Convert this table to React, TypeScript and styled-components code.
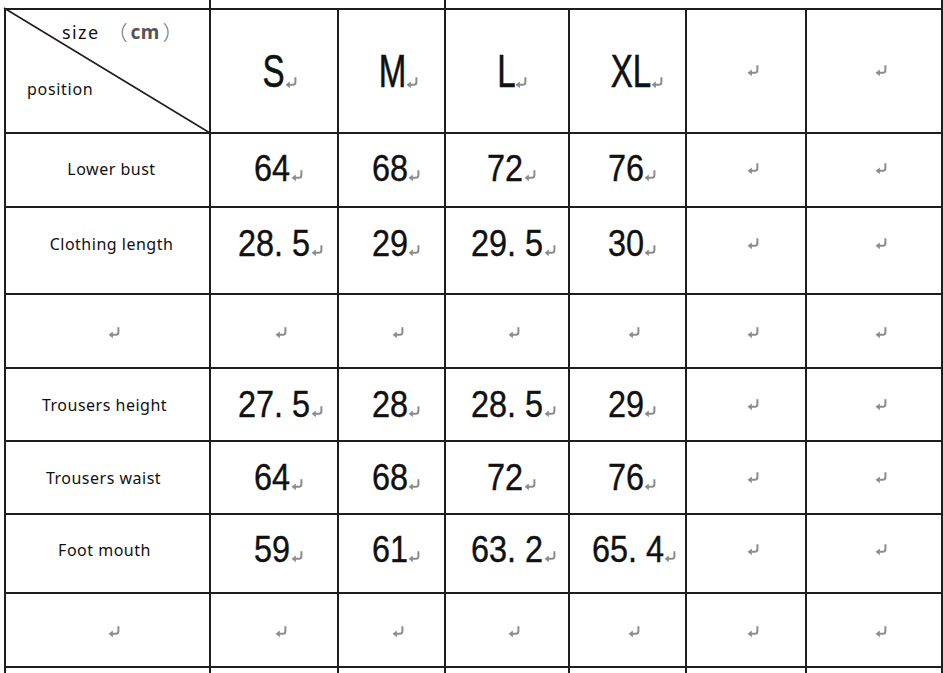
import React from "react";
import styled, { createGlobalStyle } from "styled-components";

const Global = createGlobalStyle`
  html, body { margin: 0; padding: 0; background: #fff; overflow: hidden; }
  body { font-family: "Noto Sans", "Liberation Sans", sans-serif; }
`;

const Page = styled.div`
  width: 943px;
  height: 673px;
  overflow: hidden;
  display: flex;
  flex-direction: column;
  background: #fff;
`;

const TopStrip = styled.div`
  flex: none;
  display: grid;
  grid-template-columns: 211px 235px 497px;
  height: 8px;
`;

const StripCell = styled.div`
  border-right: 2px solid #1e1e1e;
`;

const Table = styled.div`
  flex: none;
  margin-left: 4px;
  display: grid;
  grid-template-columns: 203px 126px 105px 122px 115px 118px 134px;
  grid-template-rows: 122px 72px 85px 72px 71px 71px 77px 72px 30px;
  gap: 2px;
  padding: 2px 2px 0 2px;
  background: #1e1e1e;
`;

const Cell = styled.div<{ $pad: number; $padR?: number }>`
  background: #fff;
  display: flex;
  align-items: center;
  justify-content: center;
  padding-left: ${(p) => p.$pad}px;
  padding-right: ${(p) => p.$padR ?? 0}px;
  box-sizing: border-box;
  min-width: 0;
`;

const Row = styled.div<{ $lift: number }>`
  display: contents;
  & > ${Cell} {
    padding-bottom: ${(p) => Math.max(p.$lift, 0)}px;
    padding-top: ${(p) => Math.max(-p.$lift, 0)}px;
  }
`;

const HeaderCorner = styled.div`
  position: relative;
  background: #fff;
  display: flex;
  flex-direction: column;
  padding-top: 11px;
  box-sizing: border-box;
`;

const Diagonal = styled.svg`
  position: absolute;
  left: -2px;
  top: -2px;
  width: calc(100% + 3px);
  height: calc(100% + 3px);
  overflow: visible;
`;

const SizeCaption = styled.div`
  padding-left: 56px;
  height: 22px;
  line-height: 22px;
  font-size: 18px;
  letter-spacing: 1.4px;
  color: #111;
  white-space: nowrap;
  display: flex;
  align-items: center;
`;

const Unit = styled.span`
  display: inline-flex;
  align-items: center;
  gap: 3px;
  margin-left: 8px;
  letter-spacing: 0;
  color: #4a4a4a;
  font-size: 20px;
`;

const Paren = styled.span`
  font-family: "Noto Sans CJK SC", "Noto Sans", sans-serif;
  font-weight: 300;
  color: #666;
`;

const Cm = styled.span`
  font-weight: 700;
  font-size: 19px;
  color: #555;
  letter-spacing: 0.5px;
`;

const PositionCaption = styled.div`
  margin-top: 36px;
  padding-left: 21px;
  height: 20px;
  line-height: 20px;
  font-size: 16px;
  letter-spacing: 0.7px;
  color: #111;
`;

const SizeLetter = styled.span`
  display: inline-block;
  font-family: "Liberation Sans", Arial, sans-serif;
  font-size: 46px;
  line-height: 46px;
  color: #111;
  -webkit-text-stroke: 0.6px #111;
  transform: scaleX(0.72);
  transform-origin: right center;
  margin-left: -8px;
`;

const Number = styled.span`
  display: inline-block;
  font-family: "Liberation Sans", Arial, sans-serif;
  font-size: 36px;
  line-height: 36px;
  color: #111;
  -webkit-text-stroke: 0.4px #111;
  white-space: pre;
  transform: scaleX(0.9);
  transform-origin: right center;
`;

const Label = styled.span`
  font-size: 16px;
  letter-spacing: 0.5px;
  color: #111;
  white-space: nowrap;
`;

const Group = styled.span<{ $drop: number }>`
  display: inline-flex;
  align-items: flex-end;
  & > svg {
    margin-bottom: ${(p) => p.$drop}px;
  }
`;

const MarkSvg = styled.svg`
  flex: none;
  display: block;
`;

function Mark() {
  return (
    <MarkSvg width="13" height="12" viewBox="0 0 13 12">
      <path
        d="M9.4 1.2 H10.4 V5.2 C10.4 7 9.4 7.8 7.6 7.8 H3"
        fill="none"
        stroke="#8c8c8c"
        strokeWidth="2"
      />
      <path d="M0.6 7.8 L4.8 4.4 L4.8 11.2 Z" fill="#8c8c8c" />
    </MarkSvg>
  );
}

type RowData = { label: string; labelPad: [number, number]; values: string[]; lift: number };

const rows: RowData[] = [
  { label: "Lower bust", labelPad: [8, 0], values: ["64", "68", "72", "76", "", ""], lift: 2 },
  { label: "Clothing length", labelPad: [8, 0], values: ["28. 5", "29", "29. 5", "30", "", ""], lift: 14 },
  { label: "", labelPad: [0, 0], values: ["", "", "", "", "", ""], lift: -4 },
  { label: "Trousers height", labelPad: [0, 6], values: ["27. 5", "28", "28. 5", "29", "", ""], lift: 0 },
  { label: "Trousers waist", labelPad: [0, 8], values: ["64", "68", "72", "76", "", ""], lift: 0 },
  { label: "Foot mouth", labelPad: [0, 6], values: ["59", "61", "63. 2", "65. 4", "", ""], lift: 8 },
  { label: "", labelPad: [0, 0], values: ["", "", "", "", "", ""], lift: -4 },
];

const sizes = ["S", "M", "L", "XL", "", ""];

function EmptyCell() {
  return (
    <Cell $pad={14}>
      <Mark />
    </Cell>
  );
}

export default function App() {
  return (
    <>
      <Global />
      <Page>
        <TopStrip>
          <StripCell />
          <StripCell />
          <StripCell />
        </TopStrip>
        <Table>
          <Row $lift={0}>
            <HeaderCorner>
              <Diagonal preserveAspectRatio="none" viewBox="0 0 100 100">
                <line
                  x1="0"
                  y1="0"
                  x2="100"
                  y2="100"
                  stroke="#1e1e1e"
                  strokeWidth="1.6"
                  vectorEffect="non-scaling-stroke"
                />
              </Diagonal>
              <SizeCaption>
                size
                <Unit>
                  <Paren>（</Paren>
                  <Cm>cm</Cm>
                  <Paren>）</Paren>
                </Unit>
              </SizeCaption>
              <PositionCaption>position</PositionCaption>
            </HeaderCorner>
            {sizes.map((s, i) =>
              s ? (
                <Cell key={i} $pad={12}>
                  <Group $drop={5}>
                    <SizeLetter>{s}</SizeLetter>
                    <Mark />
                  </Group>
                </Cell>
              ) : (
                <EmptyCell key={i} />
              )
            )}
          </Row>
          {rows.map((r, ri) => (
            <Row key={ri} $lift={r.lift}>
              {r.label ? (
                <Cell $pad={r.labelPad[0]} $padR={r.labelPad[1]}>
                  <Label>{r.label}</Label>
                </Cell>
              ) : (
                <EmptyCell />
              )}
              {r.values.map((v, vi) =>
                v ? (
                  <Cell key={vi} $pad={6}>
                    <Group $drop={5}>
                      <Number>{v}</Number>
                      <Mark />
                    </Group>
                  </Cell>
                ) : (
                  <EmptyCell key={vi} />
                )
              )}
            </Row>
          ))}
          <Row $lift={0}>
            {Array.from({ length: 7 }).map((_, i) => (
              <Cell key={i} $pad={0} />
            ))}
          </Row>
        </Table>
      </Page>
    </>
  );
}
